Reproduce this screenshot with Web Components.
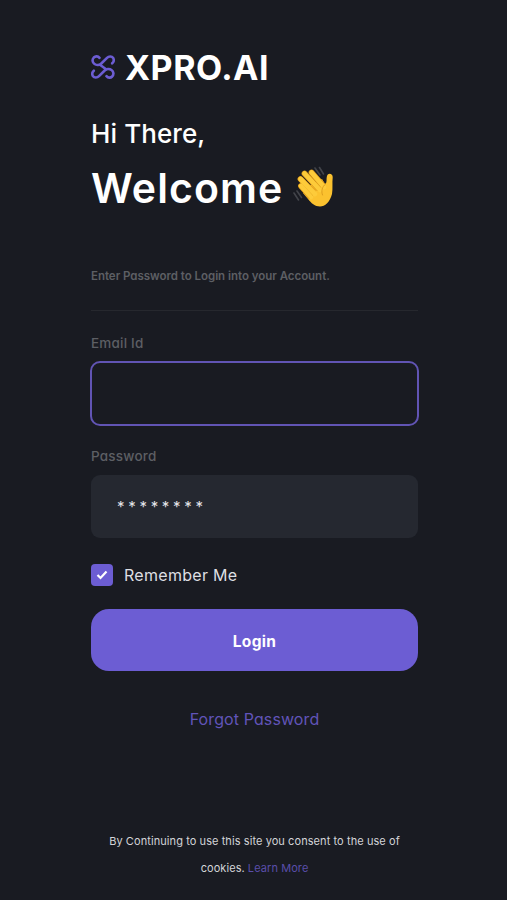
<!DOCTYPE html>
<html lang="en">
<head>
<meta charset="utf-8">
<meta name="viewport" content="width=device-width, initial-scale=1">
<title>XPRO.AI</title>
<style>
  body {
    margin: 0;
    background: #191b22;
    color: #fff;
    font-family: Inter, "Open Sans", sans-serif;
    font-feature-settings: "cv11";
  }
</style>
</head>
<body>
<login-page>
  <brand-logo slot="header">XPRO.AI</brand-logo>
  <welcome-title slot="header" greeting="Hi There,">Welcome</welcome-title>
  <form-hint>Enter Password to Login into your Account.</form-hint>
  <form-field label="Email Id" active></form-field>
  <form-field label="Password">********</form-field>
  <check-option>Remember Me</check-option>
  <primary-button>Login</primary-button>
  <text-link>Forgot Password</text-link>
  <cookie-note slot="footer">
    <span>By Continuing to use this site you consent to the use of</span>
    <span slot="end">cookies.</span>
    <a slot="end">Learn More</a>
  </cookie-note>
</login-page>

<script>
const define = (name, html) => {
  const template = document.createElement('template');
  template.innerHTML = html;
  customElements.define(name, class extends HTMLElement {
    constructor() {
      super();
      this.attachShadow({mode: 'open'});
      this.shadowRoot.appendChild(template.content.cloneNode(true));
    }

    connectedCallback() {
      // fill the elements that show an attribute of the host
      this.shadowRoot.querySelectorAll('[data-attr]').forEach(el => {
        el.textContent = this.getAttribute(el.dataset.attr);
      });
    }
  });
};

define('login-page', `
  <style>
    :host {
      display: flex;
      flex-direction: column;
      box-sizing: border-box;
      height: 900px;
      width: 327px;
      margin-left: 91px;
      padding-top: 47px;
    }
    main {
      display: flex;
      flex-direction: column;
    }
    footer {
      margin-top: auto;
      padding-bottom: 18px;
    }
  </style>
  <header><slot name="header"></slot></header>
  <main><slot></slot></main>
  <footer><slot name="footer"></slot></footer>
`);

define('brand-logo', `
  <style>
    :host {
      display: flex;
      align-items: center;
      gap: 10px;
      height: 40px;
      font-size: 34px;
      font-weight: 700;
      letter-spacing: .5px;
      white-space: nowrap;
    }
    svg { flex: none; }
  </style>
  <svg width="24" height="26" viewBox="0 0 24 26" fill="none" stroke="#6c5dd3" stroke-width="2.600" stroke-linecap="round" stroke-linejoin="round">
    <path d="M8.500 3.800C7 2 4.500 1.800 2.800 3.500C1 5.500 1.200 8.500 3.500 10C5 11 8 11.500 9.800 10L16 3.800C17.800 2 20.800 2 22.200 4C23.200 6 22.700 8 21.200 9.300"/>
    <path d="M15.500 22.200C17 24 19.500 24.200 21.200 22.500C23 20.500 22.800 17.500 20.500 16C19 15 16 14.500 14.200 16L8 22.200C6.200 24 3.200 24 1.800 22C.8 20 1.300 18 2.800 16.700"/>
    <path d="M9 10.800L15 15.200"/>
  </svg>
  <span><slot></slot></span>
`);

define('welcome-title', `
  <style>
    :host { display: block; }
    .greeting {
      margin-top: 27px;
      font-size: 26px;
      font-weight: 500;
      line-height: 40px;
      letter-spacing: .1px;
    }
    .title {
      display: flex;
      align-items: center;
      gap: 10px;
      height: 68px;
      font-size: 41px;
      font-weight: 600;
      letter-spacing: 1.100px;
    }
    svg {
      flex: none;
      margin-bottom: 3px;
    }
  </style>
  <div class="greeting" data-attr="greeting"></div>
  <div class="title">
    <span><slot></slot></span>
    <svg width="42" height="42" viewBox="0 0 42 42" fill="none" stroke-linecap="round">
      <path stroke="#42444a" stroke-width="1.600" d="M22 2L27 9M26.500 1.500L30.500 8M1 27L5.500 34M4 25L8.500 31.500"/>
      <path fill="#fbc22f" d="M11 22L29 13L32 18C34.500 17 33 13 34 10C35 6.500 40 7.500 39.700 11.500C39 17 40 22 39 28C37 36 32 40.500 27 40.500C22 40.500 18 37 15 33L10 27Z"/>
      <g stroke="#d99518" stroke-width="5.800">
        <path d="M8 20L17 30"/>
        <path d="M7.500 13L20 26"/>
        <path d="M11.500 7.500L25 22"/>
        <path d="M18.500 6.500L29 18.500"/>
      </g>
      <g stroke="#fdcb3a" stroke-width="4.700">
        <path d="M8 20L18 31"/>
        <path d="M7.500 13L22 28"/>
        <path d="M11.500 7.500L27 24"/>
        <path d="M18.500 6.500L31 21"/>
      </g>
      <path stroke="#dd9d1e" stroke-width="1" d="M32.500 18C29 21 28 25 29.500 29"/>
    </svg>
  </div>
`);

define('form-hint', `
  <style>
    :host {
      display: block;
      margin-top: 44px;
      padding-bottom: 24px;
      border-bottom: 1px solid #26282e;
      color: #5d5f64;
      font-size: 11.500px;
      font-weight: 600;
      line-height: 20px;
      letter-spacing: -.03px;
      white-space: nowrap;
    }
  </style>
  <slot></slot>
`);

define('form-field', `
  <style>
    :host {
      display: block;
      margin-top: 20px;
    }
    :host([active]) { margin-top: 22px; }
    label {
      display: block;
      color: #5d5f64;
      font-size: 13.500px;
      font-weight: 500;
      line-height: 20px;
      letter-spacing: .2px;
    }
    .box {
      box-sizing: border-box;
      height: 63px;
      margin-top: 9px;
      padding: 22px 26px 0;
      border-radius: 9px;
      background: #252830;
      color: #e4e4e8;
      font-size: 15px;
      line-height: 20px;
      letter-spacing: 3.700px;
    }
    :host([active]) .box {
      height: 65px;
      margin: 8px -1px 0;
      border: 2px solid #6154b4;
      border-radius: 10px;
      background: none;
    }
  </style>
  <label data-attr="label"></label>
  <div class="box"><slot></slot></div>
`);

define('check-option', `
  <style>
    :host {
      display: flex;
      align-items: center;
      gap: 11px;
      height: 24px;
      margin-top: 25px;
      color: #dedfe3;
      font-size: 16px;
      letter-spacing: .3px;
      white-space: nowrap;
    }
    .check {
      display: flex;
      align-items: center;
      justify-content: center;
      width: 22px;
      height: 22px;
      border-radius: 4px;
      background: #6c5dd3;
    }
  </style>
  <div class="check">
    <svg width="12" height="10" viewBox="0 0 12 10" fill="none" stroke="#fff" stroke-width="2.200">
      <path d="M1.500 5L4.500 8L10.500 1.500"/>
    </svg>
  </div>
  <span><slot></slot></span>
`);

define('primary-button', `
  <style>
    :host {
      display: flex;
      align-items: center;
      justify-content: center;
      box-sizing: border-box;
      height: 62px;
      margin-top: 22px;
      padding-top: 2px;
      border-radius: 18px;
      background: #6c5dd3;
      font-size: 15.500px;
      font-weight: 700;
      letter-spacing: .3px;
    }
  </style>
  <slot></slot>
`);

define('text-link', `
  <style>
    :host {
      display: block;
      margin-top: 36px;
      color: #6154b9;
      font-size: 16px;
      line-height: 24px;
      letter-spacing: .1px;
      text-align: center;
    }
  </style>
  <slot></slot>
`);

define('cookie-note', `
  <style>
    :host {
      display: block;
      color: #d3d4d8;
      font-size: 11px;
      font-feature-settings: normal;
      line-height: 27px;
      letter-spacing: .08px;
      white-space: nowrap;
    }
    .row {
      display: flex;
      justify-content: center;
      gap: 3px;
    }
    ::slotted(a) { color: #5a4eaa; }
  </style>
  <div class="row"><slot></slot></div>
  <div class="row"><slot name="end"></slot></div>
`);
</script>
</body>
</html>
